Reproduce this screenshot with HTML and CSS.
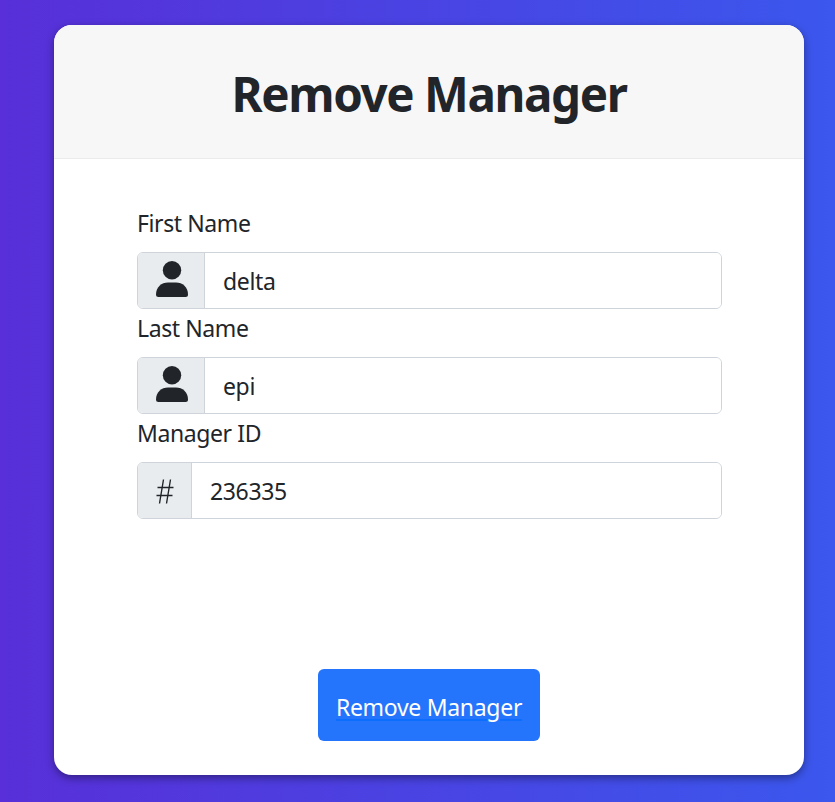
FILE: index.html
```
<!DOCTYPE html>
<html lang="en">
<head>
<meta charset="utf-8">
<title>Remove Manager</title>
<link rel="stylesheet" href="styles.css">
</head>
<body>
<main class="card">
  <header class="card-header"><h1>Remove Manager</h1></header>
  <form class="card-body">
    <label class="label" for="first">First Name</label>
    <div class="group">
      <span class="addon"><svg class="person" viewBox="0 0 32 36"><circle cx="16" cy="9.3" r="9.2"/><path d="M0 33.5C0 26 5.500 21.500 12 21.500h8C26.500 21.500 32 26 32 33.500Q32 36 29.500 36h-27Q0 36 0 33.500Z"/></svg></span>
      <input class="input" id="first" value="delta">
    </div>
    <label class="label" for="last">Last Name</label>
    <div class="group">
      <span class="addon"><svg class="person" viewBox="0 0 32 36"><circle cx="16" cy="9.3" r="9.2"/><path d="M0 33.5C0 26 5.500 21.500 12 21.500h8C26.500 21.500 32 26 32 33.500Q32 36 29.500 36h-27Q0 36 0 33.500Z"/></svg></span>
      <input class="input" id="last" value="epi">
    </div>
    <label class="label" for="manager">Manager ID</label>
    <div class="group">
      <span class="addon addon-hash"><svg class="hash" viewBox="0 0 18 25"><path d="M7.500 .5 3.500 24.500M14.500 .5 10.500 24.500M1.500 8.500h16M.5 16.500h16"/></svg></span>
      <input class="input" id="manager" value="236335">
    </div>
    <button class="button" type="button"><span>Remove Manager</span></button>
  </form>
</main>
</body>
</html>
```
FILE: styles.css
```
* { box-sizing: border-box; }
body {
  margin: 0;
  min-height: 802px;
  padding: 25px 31px 27px 54px;
  background: linear-gradient(to right, #582fd8, #3b57ed);
  font-family: "Noto Sans", "Open Sans", sans-serif;
  font-size: 23px;
  color: #212529;
}
.card {
  height: 750px;
  border-radius: 18px;
  background: #fff;
  box-shadow: 0 3px 9px rgba(0, 0, 0, .4);
  overflow: hidden;
}
.card-header {
  height: 134px;
  display: flex;
  align-items: center;
  justify-content: center;
  background: #f7f7f7;
  border-bottom: 1px solid #ebebeb;
}
h1 {
  margin: 0;
  padding-top: 4px;
  font-size: 47.5px;
  line-height: 58px;
  font-weight: 700;
  letter-spacing: -1.4px;
  white-space: nowrap;
}
.card-body {
  display: flex;
  flex-direction: column;
  padding: 45px 82px 0 83px;
}
.label {
  height: 36px;
  line-height: 38px;
  margin-bottom: 12px;
  letter-spacing: -.4px;
  white-space: nowrap;
}
.group {
  display: flex;
  height: 57px;
  border: 1px solid #ced4da;
  border-radius: 6px;
  overflow: hidden;
}
.addon {
  width: 67px;
  flex: none;
  display: flex;
  align-items: center;
  padding-left: 18px;
  background: #e9ecef;
  border-right: 1px solid #ced4da;
}
.addon-hash { width: 54px; }
.person { width: 32px; height: 36px; margin-bottom: 3px; fill: #212529; }
.hash { width: 18px; height: 25px; margin-top: 2px; fill: none; stroke: #212529; stroke-width: 1.4; }
.input {
  flex: 1;
  min-width: 0;
  border: 0;
  outline: 0;
  padding: 1px 18px 0;
  font: inherit;
  letter-spacing: -.35px;
  color: inherit;
  background: #fff;
}
.button {
  align-self: center;
  width: 222px;
  height: 72px;
  margin: 150px 1px 0 0;
  padding: 3px 0 0;
  border: 0;
  border-radius: 6px;
  background: #2575fc;
  color: #fff;
  font: inherit;
  letter-spacing: -.3px;
  white-space: nowrap;
}
.button span {
  text-decoration: underline #0d6efd 2px;
  text-underline-offset: 3px;
}
```
